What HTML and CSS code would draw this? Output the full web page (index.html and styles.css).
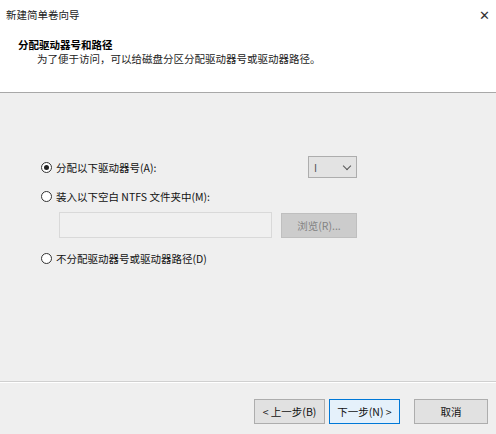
FILE: index.html
```html
<!DOCTYPE html>
<html lang="zh-CN">

<head>
  <meta charset="UTF-8">
  <meta name="viewport" content="width=device-width, initial-scale=1.0">
  <title>新建简单卷向导</title>
  <link rel="stylesheet" href="styles.css">
</head>

<body>
  <div class="wizard">
    <div class="header">
      <div class="titlebar">
        <span class="caption">新建简单卷向导</span>
        <span class="close">&#x2715;</span>
      </div>
      <h3 class="heading">分配驱动器号和路径</h3>
      <p class="subtitle">为了便于访问，可以给磁盘分区分配驱动器号或驱动器路径。</p>
    </div>

    <div class="content">
      <div class="row first">
        <label class="option"><span class="radio checked"></span>分配以下驱动器号(A):</label>
        <div class="select"><span>I</span><span class="arrow"></span></div>
      </div>
      <div class="row">
        <label class="option"><span class="radio"></span>装入以下空白 NTFS 文件夹中(M):</label>
      </div>
      <div class="row folder">
        <div class="path_input"></div>
        <div class="btn disabled">浏览(R)...</div>
      </div>
      <div class="row">
        <label class="option"><span class="radio"></span>不分配驱动器号或驱动器路径(D)</label>
      </div>
    </div>

    <div class="footer">
      <div class="btn">&lt; 上一步(B)</div>
      <div class="btn default">下一步(N) &gt;</div>
      <div class="btn cancel">取消</div>
    </div>
  </div>
</body>

</html>
```

FILE: styles.css
```css
* {
  margin: 0;
  padding: 0;
  box-sizing: border-box;
}

body {
  font-family: "Noto Sans CJK SC", "Liberation Sans", sans-serif;
  font-size: 10.5px;
  color: #000;
  background-color: #efefef;
}

.wizard {
  width: 496px;
  height: 434px;
  display: flex;
  flex-direction: column;
}

.header {
  height: 93px;
  background-color: #ffffff;
  border-bottom: 1px solid #a8a8a8;
}

.titlebar {
  height: 28px;
  display: flex;
  align-items: center;
  justify-content: space-between;
  padding: 0 6px 0 6px;
  color: #222;
}

.close {
  font-size: 13px;
  color: #333;
}

.heading {
  font-size: 10.5px;
  font-weight: 700;
  margin: 10px 0 0 18px;
  line-height: 14px;
}

.subtitle {
  margin-left: 37px;
  line-height: 14px;
  color: #222;
}

.content {
  flex: 1;
  padding: 63px 0 0 41px;
}

.row {
  display: flex;
  align-items: center;
}

.row.first {
  justify-content: space-between;
  width: 316px;
  height: 22px;
  margin-bottom: 7px;
}

.option {
  display: flex;
  align-items: center;
  gap: 4px;
  height: 22px;
  color: #111;
}

.radio {
  width: 11px;
  height: 11px;
  border: 1px solid #333;
  border-radius: 50%;
  background-color: #fff;
  display: flex;
  align-items: center;
  justify-content: center;
}

.radio.checked::after {
  content: "";
  width: 5px;
  height: 5px;
  border-radius: 50%;
  background-color: #222;
}

.select {
  width: 49px;
  height: 22px;
  border: 1px solid #adadad;
  background-color: #e3e3e3;
  display: flex;
  align-items: center;
  justify-content: space-between;
  padding: 0 6px 0 5px;
  color: #555;
}

.arrow {
  width: 6px;
  height: 6px;
  border-right: 1px solid #555;
  border-bottom: 1px solid #555;
  transform: rotate(45deg);
  margin-top: -3px;
}

.row.folder {
  margin: 5px 0 9px 18px;
  gap: 9px;
}

.path_input {
  width: 213px;
  height: 26px;
  border: 1px solid #d9d9d9;
  background-color: #f0f0f0;
}

.btn {
  width: 71px;
  height: 25px;
  border: 1px solid #adadad;
  background-color: #e1e1e1;
  display: flex;
  align-items: center;
  justify-content: center;
  color: #111;
}

.btn.disabled {
  width: 76px;
  border-color: #bfbfbf;
  background-color: #cccccc;
  color: #838383;
}

.footer {
  height: 53px;
  border-top: 1px solid #d0d0d0;
  box-shadow: inset 0 1px 0 #ffffff;
  display: flex;
  justify-content: flex-end;
  padding: 17px 8px 0 0;
  gap: 4px;
}

.btn.default {
  border-color: #0078d7;
  background-color: #e5f1fb;
}

.btn.cancel {
  margin-left: 10px;
  width: 74px;
}
```
